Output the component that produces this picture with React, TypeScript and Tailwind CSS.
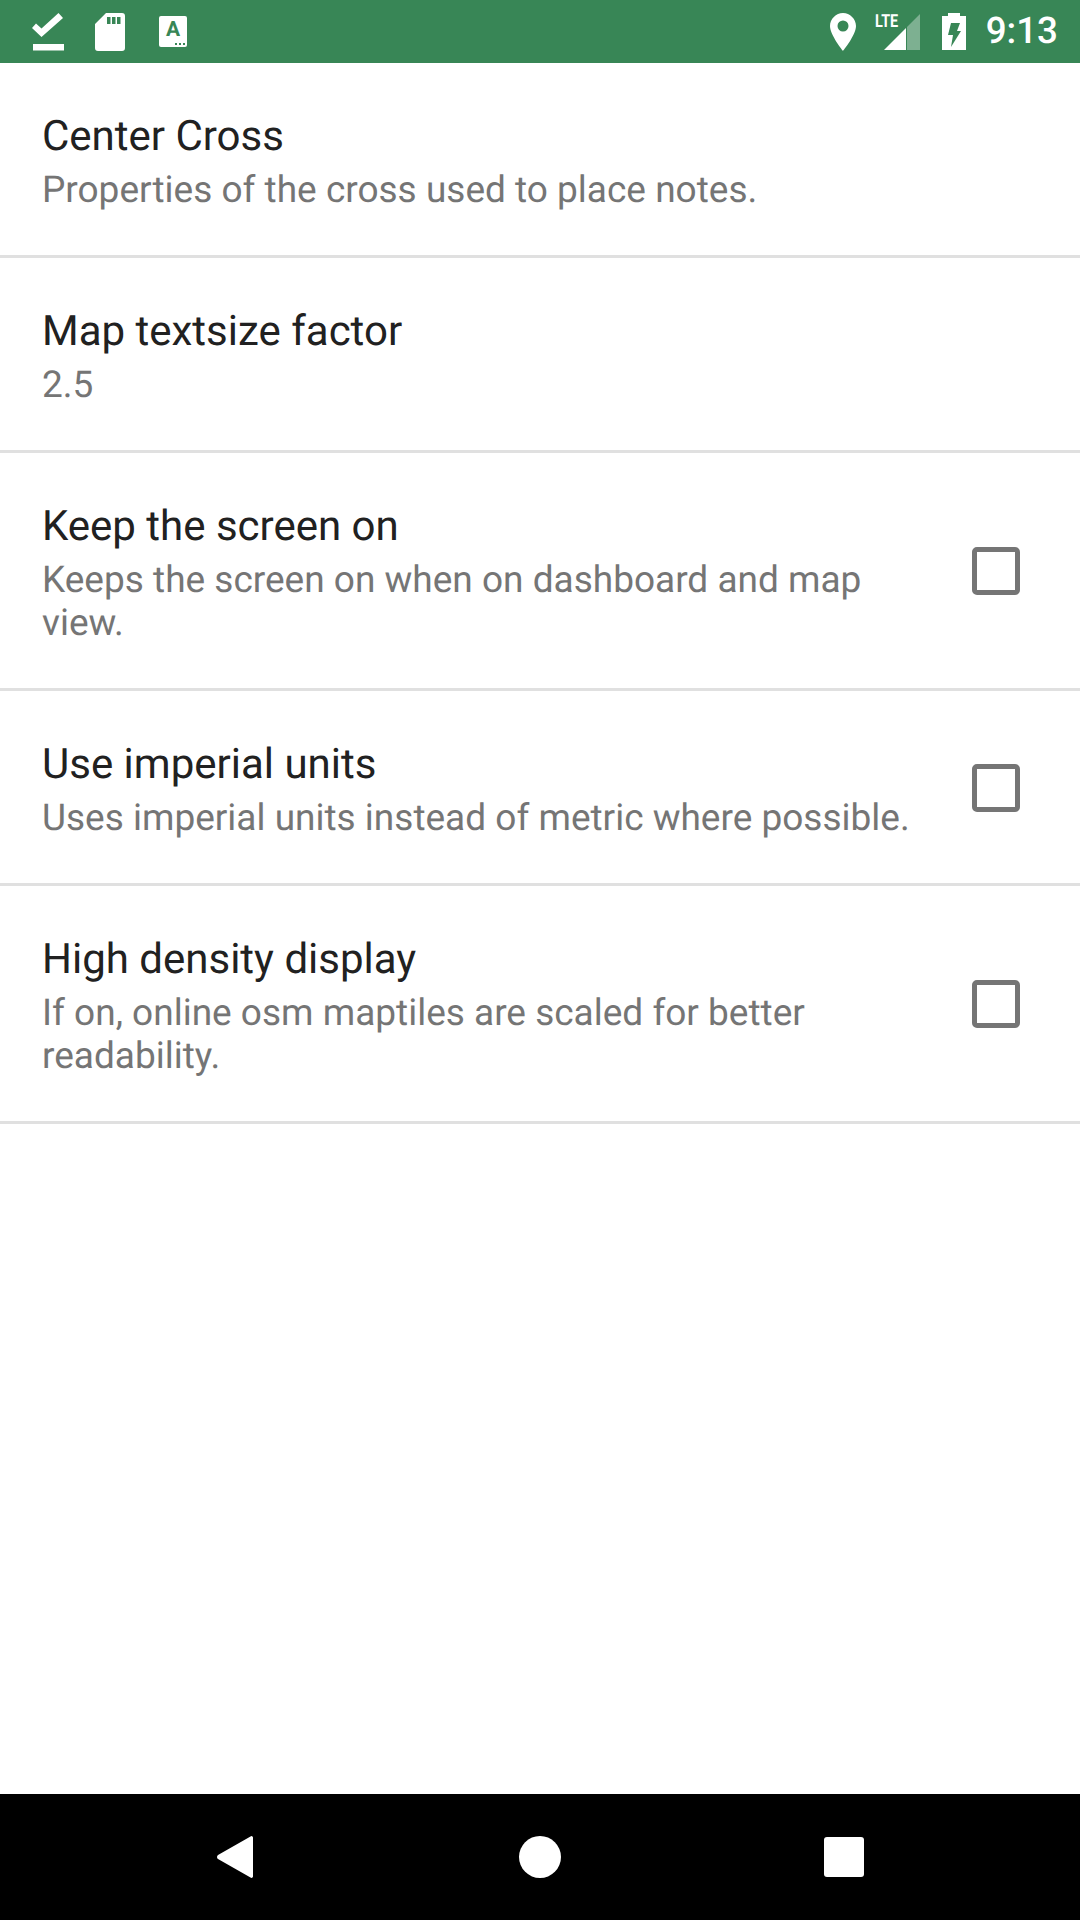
import React from 'react';

const rows = [
  { title: 'Center Cross', sub: ['Properties of the cross used to place notes.'], check: false },
  { title: 'Map textsize factor', sub: ['2.5'], check: false },
  { title: 'Keep the screen on', sub: ['Keeps the screen on when on dashboard and map', 'view.'], check: true },
  { title: 'Use imperial units', sub: ['Uses imperial units instead of metric where possible.'], check: true },
  { title: 'High density display', sub: ['If on, online osm maptiles are scaled for better', 'readability.'], check: true },
];

export default function App() {
  return (
    <div className="w-[1080px] h-[1920px] flex flex-col bg-white font-['Roboto',sans-serif] [text-rendering:geometricPrecision]">
      <div className="h-[63px] bg-[#388656] flex items-center text-white">
        <svg width="32" height="38" viewBox="0 0 32 38" className="ml-[32px]" fill="white">
          <path d="M1 31h31v6.500H1z" />
          <path d="M0 15l4-4.500 5.500 5L26.500 0 31 5 9.500 24z" />
        </svg>
        <svg width="30" height="38" viewBox="0 0 30 38" className="ml-[31px]" fill="white">
          <path fillRule="evenodd" d="M11 0h16a3 3 0 0 1 3 3v32a3 3 0 0 1-3 3H3a3 3 0 0 1-3-3V11zM12 4v7h3.500V4zm5 0v7h3.500V4zm5 0v7h3.500V4z" />
        </svg>
        <div className="relative ml-[34px] w-[28px] h-[31px] pb-[2px] bg-white rounded-[2px] flex items-center justify-center text-[#388656] text-[21px] font-bold leading-none">
          A
          <span className="absolute right-[2px] bottom-[2px] flex gap-[2px]">
            <span className="w-[2px] h-[2px] bg-[#388656]" />
            <span className="w-[2px] h-[2px] bg-[#388656]" />
            <span className="w-[2px] h-[2px] bg-[#388656]" />
          </span>
        </div>
        <div className="ml-auto flex items-center">
          <svg width="26" height="38" viewBox="0 0 26 38" fill="white">
            <path fillRule="evenodd" d="M13 0C6 0 0 6 0 13c0 9 13 25 13 25s13-16 13-25c0-7-6-13-13-13zm0 7.500a5.500 5.500 0 1 1 0 11 5.500 5.500 0 0 1 0-11z" />
          </svg>
          <div className="relative w-[45px] h-[36px] ml-[19px]">
            <svg width="36" height="36" viewBox="0 0 36 36" className="absolute right-0 bottom-0">
              <path d="M36 0v36H23V13z" fill="white" fillOpacity="0.35" />
              <path d="M22 14v22H0z" fill="white" />
            </svg>
            <span className="absolute left-0 top-[-1px] text-white text-[18px] font-bold leading-none scale-x-[0.8] origin-left">LTE</span>
          </div>
          <svg width="24" height="37" viewBox="0 0 24 37" className="ml-[22px]" fill="white">
            <path fillRule="evenodd" d="M6 0h12v3h6v34H0V3h6zM9 10h9l-3 8h4L9 34l2-12H6z" />
          </svg>
          <span className="ml-[20px] mr-[22px] text-[36.75px] font-medium leading-none">9:13</span>
        </div>
      </div>
      <div className="flex-1">
        {rows.map((r) => (
          <div key={r.title} className="flex items-center border-b-[3px] border-[#e0e0e0] pl-[42px] pt-[44px] pb-[43px]">
            <div className="flex-1 pr-[40px]">
              <div className="text-[42px] leading-[60px] mb-[2px] text-[#212121]">{r.title}</div>
              {r.sub.map((s) => (
                <div key={s} className="text-[37px] leading-[43px] whitespace-nowrap text-[#757575]">{s}</div>
              ))}
            </div>
            {r.check && <div className="w-[48px] h-[48px] mr-[60px] rounded-[5px] border-[5px] border-[#757575]" />}
          </div>
        ))}
      </div>
      <div className="h-[126px] bg-black flex items-center">
        <svg width="37" height="42" viewBox="0 0 37 42" className="ml-[217px]" fill="white">
          <path d="M36 1.500v39a1.500 1.500 0 0 1-2.500 1L1 23a2.500 2.500 0 0 1 0-4L33.500 .5A1.500 1.500 0 0 1 36 1.500z" />
        </svg>
        <div className="ml-[265px] w-[42px] h-[42px] rounded-full bg-white" />
        <div className="ml-[263px] w-[40px] h-[40px] bg-white rounded-[3px]" />
      </div>
    </div>
  );
}
